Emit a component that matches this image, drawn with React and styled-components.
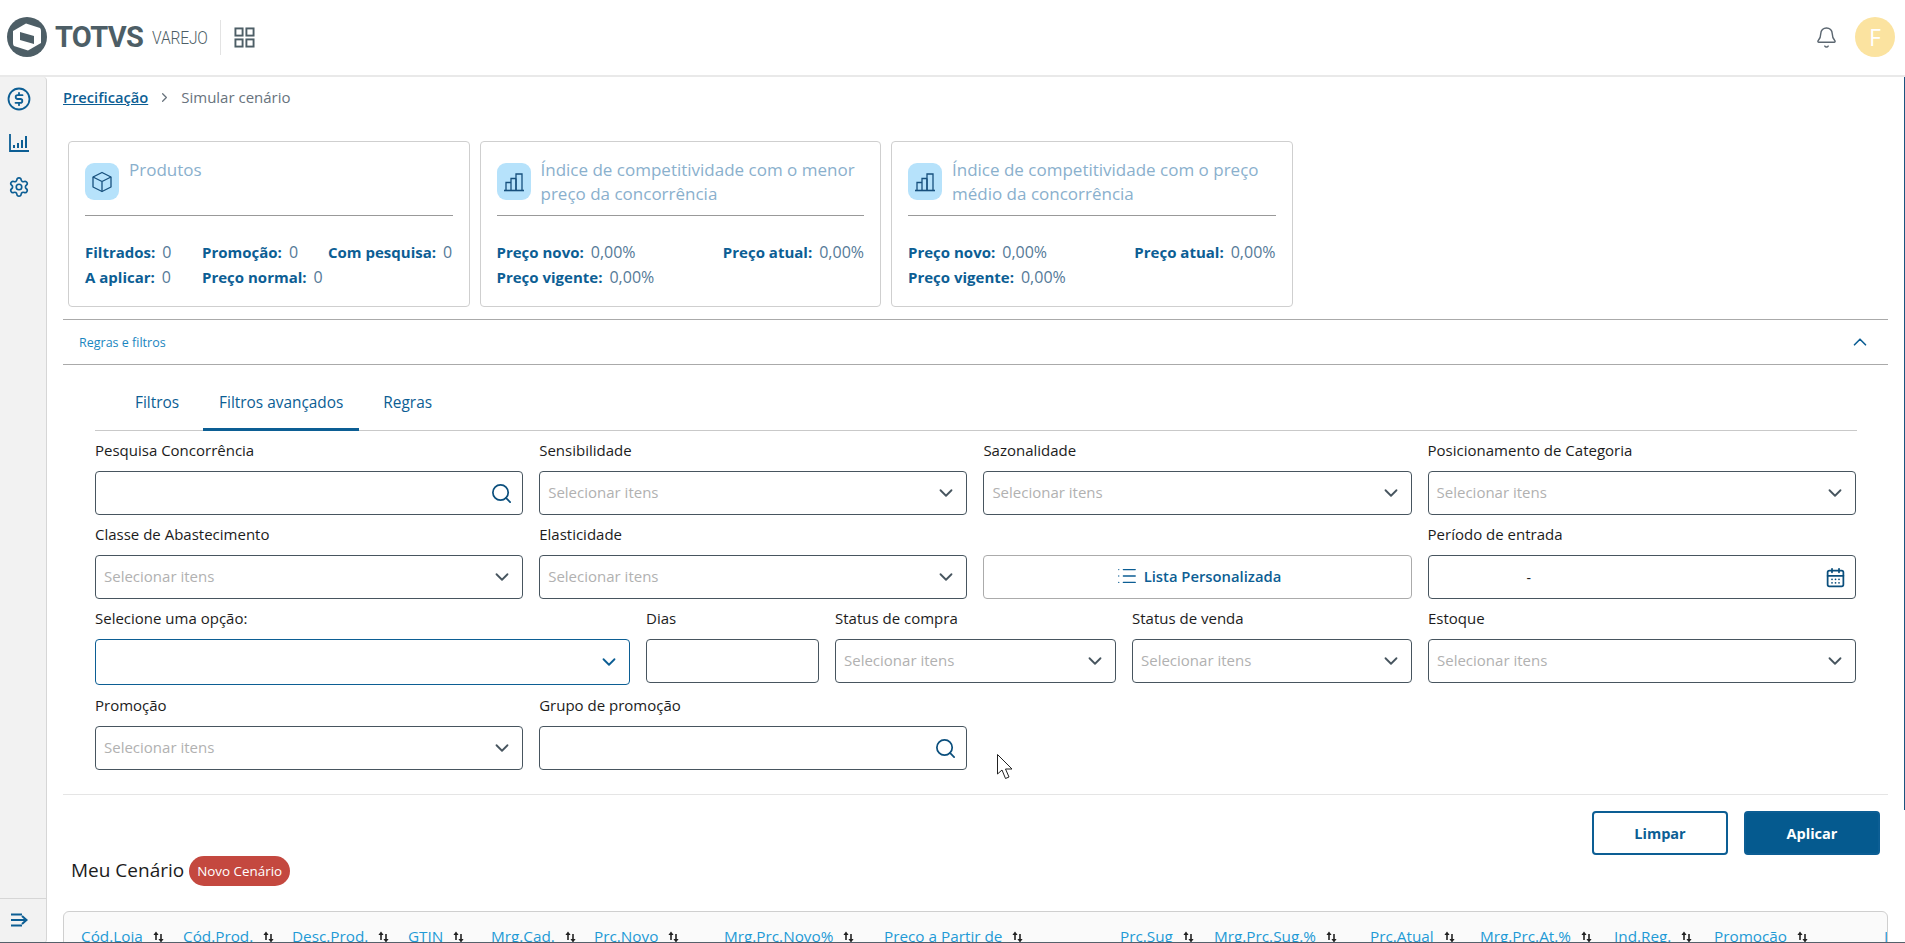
import React from 'react';
import styled, { createGlobalStyle } from 'styled-components';
import { Bell, CalendarDays, ChevronDown, ChevronRight, ChevronUp, List, Search, Settings } from 'lucide-react';

const BLUE = '#0c5e94';
const FONT = '"Open Sans", "Noto Sans", Arial, sans-serif';

const GlobalStyle = createGlobalStyle`
  html, body {
    margin: 0;
    padding: 0;
    height: 943px;
    overflow: hidden;
    background: #fff;
    font-family: ${FONT};
  }
  * { box-sizing: border-box; }
`;

const Page = styled.div`
  position: relative;
  width: 1905px;
  height: 943px;
  overflow: hidden;
  background: #fff;
`;

const TopBar = styled.header`
  height: 77px;
  display: flex;
  align-items: center;
  padding: 0 10px 1px 7px;
  border-bottom: 2px solid #e9e9e9;
`;

const LogoWord = styled.span`
  margin-left: 8px;
  font-family: Roboto, Arial, sans-serif;
  font-weight: 700;
  font-size: 29px;
  letter-spacing: -0.7px;
  color: #4d5e66;
`;

const LogoSub = styled.span`
  margin-left: 9px;
  margin-right: -12px;
  font-family: Roboto, Arial, sans-serif;
  font-weight: 300;
  font-size: 19px;
  letter-spacing: -0.2px;
  color: #4d5e66;
  transform: scaleX(0.82);
  transform-origin: left center;
`;

const TopDivider = styled.span`
  width: 1px;
  height: 35px;
  margin: 0 13px 0 12px;
  background: #e3e3e3;
`;

const TopRight = styled.div`
  margin-left: auto;
  display: flex;
  align-items: center;
  gap: 17px;
`;

const Avatar = styled.div`
  width: 40px;
  height: 40px;
  border-radius: 50%;
  background: #fbe3a0;
  color: #fff;
  font-size: 23px;
  font-weight: 500;
  display: flex;
  align-items: center;
  justify-content: center;
`;

const Body = styled.div`
  display: flex;
  height: 866px;
`;

const Side = styled.nav`
  width: 47px;
  flex: none;
  display: flex;
  flex-direction: column;
  background: #f2f2f2;
  border-right: 1px solid #d6d6d6;
  border-top-right-radius: 4px;
  border-bottom-right-radius: 4px;
`;

const SideIcons = styled.div`
  flex: 1;
  display: flex;
  flex-direction: column;
  align-items: center;
  gap: 19px;
  padding: 9px 8px 0 0;
  color: ${BLUE};
`;

const SideIcon = styled.span`
  width: 25px;
  height: 25px;
  display: flex;
  align-items: center;
  justify-content: center;
`;

const SideFoot = styled.div`
  height: 45px;
  border-top: 1px solid #d6d6d6;
  display: flex;
  align-items: center;
  justify-content: center;
  padding: 0 8px 2px 0;
`;

const Main = styled.main`
  flex: 1;
  min-width: 0;
  padding: 0 17px 0 16px;
`;

const Crumbs = styled.div`
  height: 40px;
  display: flex;
  align-items: center;
  gap: 9px;
  font-size: 15px;
  color: #68737d;
`;

const CrumbLink = styled.a`
  color: ${BLUE};
  font-weight: 600;
  font-size: 14.7px;
  text-decoration: underline;
`;

const Cards = styled.div`
  display: flex;
  gap: 10px;
  margin: 24px 0 12px 5px;
`;

const Card = styled.section`
  width: 401.5px;
  height: 166px;
  border: 1px solid #cfcfcf;
  border-radius: 4px;
  padding: 21px 16px 0;
`;

const CardHead = styled.div`
  display: flex;
  gap: 10px;
  height: 53px;
  border-bottom: 1px solid #999;
`;

const IconTile = styled.div`
  width: 34px;
  height: 37px;
  flex: none;
  border-radius: 9px;
  background: #b6e2fb;
  display: flex;
  align-items: center;
  justify-content: center;
`;

const CardTitle = styled.div`
  font-size: 17px;
  line-height: 24px;
  margin-top: -5px;
  color: #8ab0cd;
`;

const Stats = styled.div`
  display: grid;
  grid-template-columns: ${(p) => p.$cols};
  row-gap: 1px;
  margin-top: 24px;
`;

const Stat = styled.div`
  font-size: 16px;
  line-height: 24px;
  white-space: nowrap;
  color: #557a98;
`;

const StatKey = styled.b`
  font-size: 15px;
  font-weight: 700;
  color: ${BLUE};
  margin-right: 7px;
`;

const AccordionBar = styled.div`
  height: 46px;
  border-top: 1px solid #aaa;
  border-bottom: 1px solid #aaa;
  display: flex;
  align-items: center;
  justify-content: space-between;
  padding: 0 17px 0 16px;
  font-size: 12.5px;
  color: #1a86c0;
`;

const FilterArea = styled.div`
  padding: 0 0 0 32px;
  width: 1794px;
`;

const Tabs = styled.div`
  display: flex;
  gap: 8px;
  height: 66px;
  padding-left: 24px;
  border-bottom: 1px solid #c9c9c9;
`;

const Tab = styled.div`
  height: 66px;
  padding: 8px 16px 0;
  display: flex;
  align-items: center;
  font-size: 15.4px;
  font-weight: 500;
  color: ${BLUE};
  box-shadow: ${(p) => (p.$active ? `inset 0 -3px 0 ${BLUE}` : 'none')};
`;

const FormRows = styled.div`
  display: flex;
  flex-direction: column;
  gap: 9px;
  padding-top: 9px;
  width: 1762px;
`;

const Row = styled.div`
  display: grid;
  column-gap: 16px;
  margin-top: ${(p) => p.$gap || 0};
  grid-template-columns: ${(p) => p.$cols || 'repeat(4, 428.2px)'};
`;

const Field = styled.div`
  display: flex;
  flex-direction: column;
  justify-content: ${(p) => (p.$bottom ? 'flex-end' : 'flex-start')};
  min-width: 0;
`;

const Label = styled.label`
  height: 20px;
  line-height: 20px;
  margin-bottom: 11px;
  font-size: 15px;
  font-weight: 500;
  color: #1c1c1c;
  white-space: nowrap;
`;

const Box = styled.div`
  height: ${(p) => (p.$focus ? '46px' : '44px')};
  border: 1px solid ${(p) => (p.$focus ? BLUE : '#47555f')};
  border-radius: 4px;
  display: flex;
  align-items: center;
  justify-content: space-between;
  padding: 0 9px 0 8px;
  background: #fff;
  color: ${(p) => (p.$focus ? BLUE : '#47555f')};
`;

const Placeholder = styled.span`
  padding-bottom: 2px;
  font-size: 15px;
  color: #b1b1b1;
`;

const DateDash = styled.span`
  padding-left: 90px;
  font-size: 14px;
  color: #222;
`;

const ListButton = styled.button`
  height: 44px;
  border: 1px solid #ababab;
  border-radius: 4px;
  background: #fff;
  color: ${BLUE};
  font-family: ${FONT};
  font-size: 14.8px;
  font-weight: 600;
  display: flex;
  align-items: center;
  justify-content: center;
  gap: 6px;
  padding: 0 0 2px 2px;
`;

const RuleLine = styled.div`
  height: 1px;
  background: #e5e5e5;
  margin-top: 24px;
`;

const Actions = styled.div`
  display: flex;
  justify-content: flex-end;
  gap: 16px;
  padding: 16px 8px 0 0;
`;

const ActionButton = styled.button`
  width: 136px;
  height: 44px;
  border-radius: 4px;
  border: 2px solid ${BLUE};
  background: ${(p) => (p.$primary ? '#055a8f' : '#fff')};
  color: ${(p) => (p.$primary ? '#fff' : BLUE)};
  font-family: ${FONT};
  font-size: 14.5px;
  font-weight: 700;
`;

const ScenarioHead = styled.div`
  display: flex;
  align-items: center;
  gap: 5px;
  height: 30px;
  margin-top: 1px;
  padding-left: 8px;
`;

const ScenarioTitle = styled.h2`
  margin: -2px 0 0;
  font-size: 19px;
  font-weight: 500;
  color: #1c1c1c;
`;

const Badge = styled.span`
  height: 30px;
  padding: 0 8px;
  border-radius: 15px;
  background: #c4483f;
  color: #fff;
  font-size: 13.4px;
  display: flex;
  align-items: center;
`;

const TableHead = styled.div`
  height: 60px;
  margin-top: 25px;
  overflow: hidden;
  border: 1px solid #cfcfcf;
  border-radius: 6px 6px 0 0;
  background: #fafafa;
  padding: 14px 0 0 17px;
  display: grid;
  grid-template-columns: 102px 109px 116px 83px 103px 130px 160px 236px 94px 156px 110px 134px 100px 170px 40px;
`;

const HeadCell = styled.div`
  display: flex;
  align-items: flex-start;
  gap: 10px;
  font-size: 15.3px;
  line-height: 20px;
  color: #1f9ad6;
  white-space: nowrap;
`;

const SortMark = styled.svg`
  width: 11px;
  height: 12px;
  margin-top: 5px;
  flex: none;
`;

const Cursor = styled.svg`
  position: absolute;
  left: 996px;
  top: 753px;
`;

const ScrollThumb = styled.div`
  position: absolute;
  right: 0;
  top: 77px;
  width: 1px;
  height: 733px;
  background: #1d5480;
`;

const BottomEdge = styled.div`
  position: absolute;
  left: 0;
  right: 0;
  bottom: 0;
  height: 1px;
  background: #55606a;
`;

const LogoMark = () => (
  <svg width="40" height="40" viewBox="0 0 40 40">
    <circle cx="20" cy="20" r="20" fill="#4d5e66" />
    <path d="M6 14 L19 6.5 L33 11 Q34 12 34 14 L34 26 L21 33.5 L7 29 Q6 28 6 26 Z" fill="#fff" />
    <path d="M13 15 L27 19 L27 27 L13 23 Z" fill="#4d5e66" />
  </svg>
);

const AppsIcon = () => (
  <svg width="21" height="21" viewBox="0 0 22 22" fill="none" stroke="#4d5e66" strokeWidth="2">
    <rect x="1.5" y="1.5" width="7.5" height="7.5" />
    <rect x="13" y="1.5" width="7.5" height="7.5" />
    <rect x="1.5" y="13" width="7.5" height="7.5" />
    <rect x="13" y="13" width="7.5" height="7.5" />
  </svg>
);

const DollarIcon = () => (
  <svg width="24" height="24" viewBox="0 0 24 24" fill="none" stroke={BLUE} strokeWidth="1.8" strokeLinecap="round">
    <circle cx="12" cy="12" r="10.5" />
    <path d="M15.5 8.2 H10.6 a1.9 1.9 0 0 0 0 3.8 h2.8 a1.9 1.9 0 0 1 0 3.8 H8.5" />
    <path d="M12 5.8 V8 M12 16 V18.2" />
  </svg>
);

const BarsIcon = () => (
  <svg width="22" height="20" viewBox="0 0 22 20" fill="none" stroke={BLUE} strokeWidth="1.8">
    <path d="M2 1 V18 H21" />
    <path d="M6 15 V12 M10 15 V10 M14 15 V7 M18 15 V3" strokeWidth="2" />
  </svg>
);

const CubeIcon = () => (
  <svg width="22" height="22" viewBox="0 0 22 22" fill="none" stroke="#17507d" strokeWidth="1.3" strokeLinejoin="round">
    <path d="M11 1.5 L20 6 V16 L11 20.5 L2 16 V6 Z" />
    <path d="M2 6 L11 10.5 L20 6 M11 10.5 V20.5" />
  </svg>
);

const StepsIcon = () => (
  <svg width="22" height="20" viewBox="0 0 22 20" fill="none" stroke="#17507d" strokeWidth="1.3">
    <path d="M1 18.5 H21" strokeWidth="1.6" />
    <path d="M3 18 V10.5 H8 V18 M8 18 V6.5 H13 M13 18 V2 H19 V18" />
    <path d="M13 6.5 V18" />
  </svg>
);

const CollapseIcon = () => (
  <svg width="18" height="14" viewBox="0 0 18 14" fill="none" stroke={BLUE} strokeWidth="2">
    <path d="M1 1.5 H12 M1 7 H16 M1 12.5 H12 M12 3 L16.5 7 L12 11" />
  </svg>
);

const SortIcon = () => (
  <SortMark viewBox="0 0 11 12">
    <path d="M3 0.5 L5.6 4 H3.8 V9 H2.2 V4 H0.4 Z" fill="#222" />
    <path d="M8 11.5 L5.4 8 H7.2 V3 H8.8 V8 H10.6 Z" fill="#222" />
  </SortMark>
);

const Select = ({ children, focus }) => (
  <Box $focus={focus}>
    <Placeholder>{children}</Placeholder>
    <ChevronDown size={22} strokeWidth={2} />
  </Box>
);

const SelectField = ({ label }) => (
  <Field>
    <Label>{label}</Label>
    <Select>Selecionar itens</Select>
  </Field>
);

const SearchField = ({ label }) => (
  <Field>
    <Label>{label}</Label>
    <Box>
      <span />
      <Search size={23} color="#0b4f7d" strokeWidth={1.8} />
    </Box>
  </Field>
);

const columns = [
  'Cód.Loja', 'Cód.Prod.', 'Desc.Prod.', 'GTIN', 'Mrg.Cad.', 'Prc.Novo', 'Mrg.Prç.Novo%', 'Preço a Partir de',
  'Prç.Sug', 'Mrg.Prç.Sug.%', 'Prç.Atual', 'Mrg.Prç.At.%', 'Ind.Reg.', 'Promoção', 'Ind.Comp.',
];

const priceStats = (
  <Stats $cols="1fr auto">
    <Stat><StatKey>Preço novo:</StatKey>0,00%</Stat>
    <Stat><StatKey>Preço atual:</StatKey>0,00%</Stat>
    <Stat><StatKey>Preço vigente:</StatKey>0,00%</Stat>
  </Stats>
);

export default function App() {
  return (
    <Page>
      <GlobalStyle />
      <TopBar>
        <LogoMark />
        <LogoWord>TOTVS</LogoWord>
        <LogoSub>VAREJO</LogoSub>
        <TopDivider />
        <AppsIcon />
        <TopRight>
          <Bell size={23} color="#5b6670" strokeWidth={1.5} />
          <Avatar>F</Avatar>
        </TopRight>
      </TopBar>
      <Body>
        <Side>
          <SideIcons>
            <SideIcon><DollarIcon /></SideIcon>
            <SideIcon><BarsIcon /></SideIcon>
            <SideIcon><Settings size={22} strokeWidth={1.8} /></SideIcon>
          </SideIcons>
          <SideFoot><CollapseIcon /></SideFoot>
        </Side>
        <Main>
          <Crumbs>
            <CrumbLink>Precificação</CrumbLink>
            <ChevronRight size={15} />
            <span>Simular cenário</span>
          </Crumbs>
          <Cards>
            <Card>
              <CardHead>
                <IconTile><CubeIcon /></IconTile>
                <CardTitle>Produtos</CardTitle>
              </CardHead>
              <Stats $cols="117px 126px 1fr">
                <Stat><StatKey>Filtrados:</StatKey>0</Stat>
                <Stat><StatKey>Promoção:</StatKey>0</Stat>
                <Stat><StatKey>Com pesquisa:</StatKey>0</Stat>
                <Stat><StatKey>A aplicar:</StatKey>0</Stat>
                <Stat><StatKey>Preço normal:</StatKey>0</Stat>
              </Stats>
            </Card>
            <Card>
              <CardHead>
                <IconTile><StepsIcon /></IconTile>
                <CardTitle>Índice de competitividade com o menor preço da concorrência</CardTitle>
              </CardHead>
              {priceStats}
            </Card>
            <Card>
              <CardHead>
                <IconTile><StepsIcon /></IconTile>
                <CardTitle>Índice de competitividade com o preço médio da concorrência</CardTitle>
              </CardHead>
              {priceStats}
            </Card>
          </Cards>
          <AccordionBar>
            <span>Regras e filtros</span>
            <ChevronUp size={22} color={BLUE} strokeWidth={1.8} />
          </AccordionBar>
          <FilterArea>
            <Tabs>
              <Tab>Filtros</Tab>
              <Tab $active>Filtros avançados</Tab>
              <Tab>Regras</Tab>
            </Tabs>
            <FormRows>
              <Row>
                <SearchField label="Pesquisa Concorrência" />
                <SelectField label="Sensibilidade" />
                <SelectField label="Sazonalidade" />
                <SelectField label="Posicionamento de Categoria" />
              </Row>
              <Row>
                <SelectField label="Classe de Abastecimento" />
                <SelectField label="Elasticidade" />
                <Field $bottom>
                  <ListButton><List size={22} strokeWidth={1.4} />Lista Personalizada</ListButton>
                </Field>
                <Field>
                  <Label>Período de entrada</Label>
                  <Box>
                    <DateDash>-</DateDash>
                    <CalendarDays size={21} color="#0b4f7d" strokeWidth={2} />
                  </Box>
                </Field>
              </Row>
              <Row $cols="535px 173px 281px 280px 428.2px">
                <Field>
                  <Label>Selecione uma opção:</Label>
                  <Select focus />
                </Field>
                <Field>
                  <Label>Dias</Label>
                  <Box />
                </Field>
                <SelectField label="Status de compra" />
                <SelectField label="Status de venda" />
                <SelectField label="Estoque" />
              </Row>
              <Row $gap="1px">
                <SelectField label="Promoção" />
                <SearchField label="Grupo de promoção" />
              </Row>
            </FormRows>
          </FilterArea>
          <RuleLine />
          <Actions>
            <ActionButton>Limpar</ActionButton>
            <ActionButton $primary>Aplicar</ActionButton>
          </Actions>
          <ScenarioHead>
            <ScenarioTitle>Meu Cenário</ScenarioTitle>
            <Badge>Novo Cenário</Badge>
          </ScenarioHead>
          <TableHead>
            {columns.map((name) => (
              <HeadCell key={name}>{name}<SortIcon /></HeadCell>
            ))}
          </TableHead>
        </Main>
      </Body>
      <Cursor width="20" height="28" viewBox="0 0 20 28" fill="#fff" stroke="#222" strokeWidth="1">
        <path d="M1.5 1.5 V21 L6 17 L9.5 25.5 L13 24 L9.5 16 L16 16 Z" />
      </Cursor>
      <ScrollThumb />
      <BottomEdge />
    </Page>
  );
}
